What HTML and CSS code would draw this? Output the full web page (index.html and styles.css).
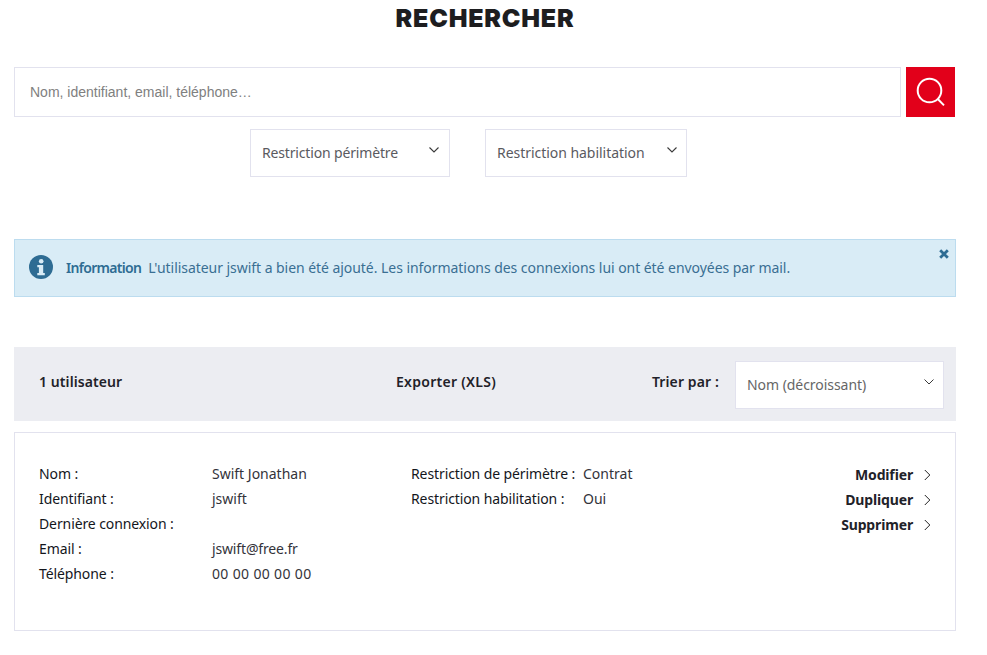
FILE: index.html
```html
<!DOCTYPE html>
<html lang="fr">
<head>
<meta charset="utf-8">
<title>Rechercher</title>
<link rel="stylesheet" href="styles.css">
</head>
<body>
<main class="page">
  <h1 class="title">RECHERCHER</h1>
  <form class="search">
    <input class="search-input" type="text" placeholder="Nom, identifiant, email, téléphone…">
    <button class="search-btn" type="button" aria-label="Rechercher">
      <svg width="30" height="30" viewBox="0 0 30 30" fill="none" stroke="#fff" stroke-width="2"><circle cx="13.5" cy="13.5" r="11.8"/><path d="M21.8 22l6.2 6.4"/></svg>
    </button>
  </form>
  <div class="filters">
    <div class="select select-perimetre"><span>Restriction périmètre</span><svg class="chev" width="10" height="6" viewBox="0 0 10 6" fill="none" stroke="#3a3a3a" stroke-width="1.1"><path d="M.5.5L5 5 9.5.5"/></svg></div>
    <div class="select select-habilitation"><span>Restriction habilitation</span><svg class="chev" width="10" height="6" viewBox="0 0 10 6" fill="none" stroke="#3a3a3a" stroke-width="1.1"><path d="M.5.5L5 5 9.5.5"/></svg></div>
  </div>
  <div class="alert">
    <svg class="alert-icon" width="24" height="24" viewBox="0 0 24 24"><circle cx="12" cy="12" r="12" fill="#2e6c93"/><circle cx="12.2" cy="6.2" r="2.3" fill="#d9ecf6"/><path d="M8.3 10h5.9v8h1.6v2.3H8.3V18h1.6v-5.7H8.3z" fill="#d9ecf6"/></svg>
    <strong class="alert-title">Information</strong>
    <span class="alert-text">L'utilisateur jswift a bien été ajouté. Les informations des connexions lui ont été envoyées par mail.</span>
    <svg class="alert-close" width="10" height="10" viewBox="0 0 10 10" fill="none" stroke="#2e6c93" stroke-width="2.8"><path d="M1.2 1.2l7.6 7.6M8.8 1.2L1.2 8.8"/></svg>
  </div>
  <div class="toolbar">
    <strong class="count">1 utilisateur</strong>
    <strong class="export">Exporter (XLS)</strong>
    <strong class="sort-label">Trier par :</strong>
    <div class="select sort-select"><span>Nom (décroissant)</span><svg class="chev" width="10" height="6" viewBox="0 0 10 6" fill="none" stroke="#3a3a3a" stroke-width="1"><path d="M.5.5L5 5 9.5.5"/></svg></div>
  </div>
  <section class="card">
    <dl class="details details-main">
      <dt>Nom :</dt><dd>Swift Jonathan</dd>
      <dt>Identifiant :</dt><dd>jswift</dd>
      <dt>Dernière connexion :</dt><dd></dd>
      <dt>Email :</dt><dd class="mail">jswift@free.fr</dd>
      <dt>Téléphone :</dt><dd class="tel">00 00 00 00 00</dd>
    </dl>
    <dl class="details details-rights">
      <dt>Restriction de périmètre :</dt><dd>Contrat</dd>
      <dt>Restriction habilitation :</dt><dd>Oui</dd>
    </dl>
    <ul class="actions">
      <li><span>Modifier</span><svg width="7" height="12" viewBox="0 0 7 12" fill="none" stroke="#222" stroke-width="1"><path d="M.8 1l5 5-5 5"/></svg></li>
      <li><span>Dupliquer</span><svg width="7" height="12" viewBox="0 0 7 12" fill="none" stroke="#222" stroke-width="1"><path d="M.8 1l5 5-5 5"/></svg></li>
      <li><span>Supprimer</span><svg width="7" height="12" viewBox="0 0 7 12" fill="none" stroke="#222" stroke-width="1"><path d="M.8 1l5 5-5 5"/></svg></li>
    </ul>
  </section>
</main>
</body>
</html>
```
FILE: styles.css
```css
* { box-sizing: border-box; }
html, body { margin: 0; padding: 0; background: #fff; }
body { font-family: "Noto Sans", "Open Sans", sans-serif; font-size: 14px; color: #1f2229; }
.page { width: 970px; padding: 0 14px; }
.title { margin: 0; height: 67px; padding-top: 3px; text-align: center; font-family: Inter, sans-serif; font-weight: 900; font-size: 25px; letter-spacing: .8px; line-height: 30px; color: #1d1d1f; }
.search { display: flex; gap: 5px; width: 941px; height: 50px; }
.search-input { flex: 1; min-width: 0; height: 50px; border: 1px solid #e2e2ee; padding: 0 15px; font-family: "Liberation Sans", Arial, sans-serif; font-size: 14px; outline: 0; }
.search-input::placeholder { color: #808080; opacity: 1; }
.search-btn { width: 49px; height: 50px; border: 0; padding: 0; background: #e2001a; display: flex; align-items: center; justify-content: center; }
.filters { display: flex; gap: 35px; margin-top: 12px; padding-left: 236px; }
.select { position: relative; height: 48px; border: 1px solid #e2e2ee; background: #fff; padding: 13px 11px 0; color: #5a5a5f; line-height: 20px; letter-spacing: -.04px; }
.select .chev { position: absolute; top: 17px; right: 9px; }
.select-perimetre { width: 200px; letter-spacing: -.16px; }
.select-perimetre .chev { right: 10px; }
.select-habilitation { width: 202px; }
.alert { display: flex; align-items: center; position: relative; height: 58px; margin-top: 62px; width: 942px; padding: 0 0 2px 14px; background: #d9ecf6; border: 1px solid #bcdcef; color: #3a6f93; letter-spacing: -.05px; }
.alert-icon { flex: none; margin-right: 13px; }
.alert-title { font-weight: 600; color: #2e6c93; margin-right: 7px; letter-spacing: -.7px; }
.alert-close { position: absolute; top: 9px; right: 6px; }
.toolbar { display: flex; align-items: center; position: relative; height: 74px; margin-top: 50px; width: 942px; padding-left: 25px; background: #ecedf2; font-weight: 600; }
.toolbar strong { display: block; font-weight: 600; margin-top: -6px; }
.count { width: 357px; letter-spacing: .08px; }
.export { width: 256px; letter-spacing: .28px; }
.sort-label { width: 83px; letter-spacing: .1px; }
.sort-select { width: 209px; margin-top: 1px; font-weight: 400; color: #666; padding-top: 13px; letter-spacing: -.05px; }
.card { display: flex; width: 942px; height: 199px; margin-top: 11px; padding: 28px 24px 0 24px; border: 1px solid #e2e2ee; }
.details { display: grid; margin: 0; grid-auto-rows: 25px; line-height: 25px; align-content: start; }
.details dt { color: #14161c; letter-spacing: -.1px; }
.details dd { margin: 0; color: #33333a; }
.details dd.mail { letter-spacing: -.15px; }
.details dd.tel { letter-spacing: .35px; }
.details-main { grid-template-columns: 173px 199px; }
.details-rights { grid-template-columns: 172px auto; }
.actions { list-style: none; margin: 1px 0 0 auto; padding: 0; }
.actions li { display: flex; align-items: center; justify-content: flex-end; gap: 11px; height: 25px; font-weight: 700; letter-spacing: -.15px; }
```
